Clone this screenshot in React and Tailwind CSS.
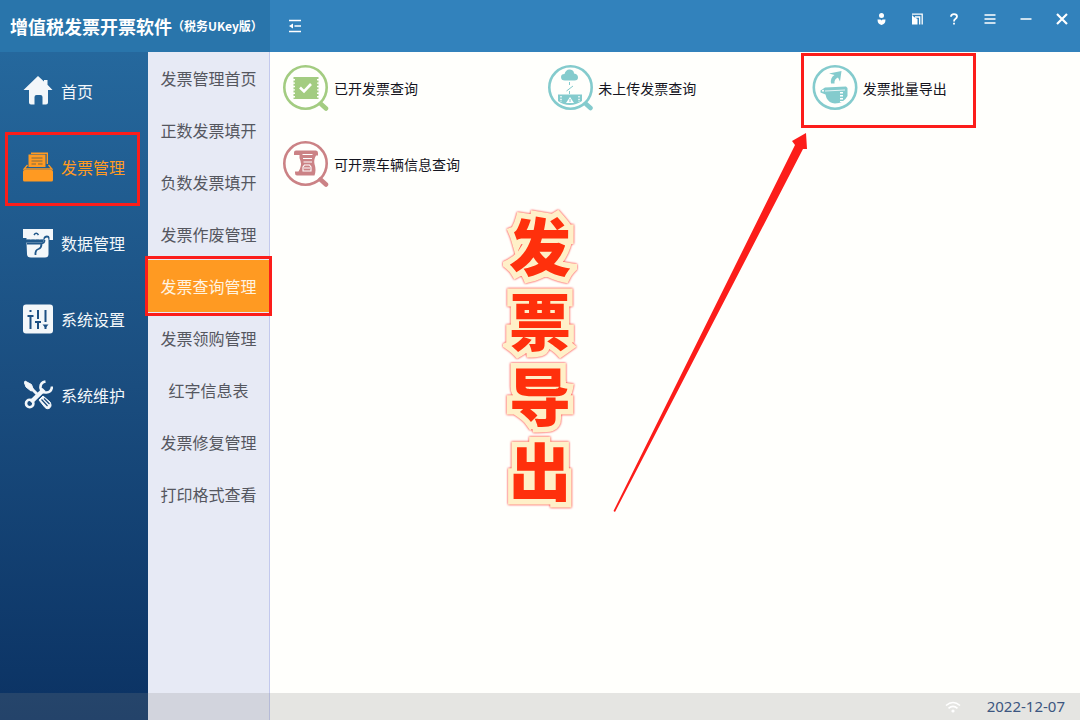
import { useState } from 'react';
import { clsx } from 'clsx';

const HomeIcon = () => (
  <svg viewBox="0 0 30 30" className="size-[30px]" fill="currentColor">
    <path d="M15 0 L21 5.5 V4 H24.5 V8.8 L29.5 14 H25 V26.5 Q25 28.5 23 28.5 H19.5 V21 Q19.5 19 17.5 19 H13.5 Q11.5 19 11.5 21 V28.5 H8 Q6 28.5 6 26.5 V14 H0.5 Z" />
  </svg>
);

const InvoiceIcon = () => (
  <svg viewBox="0 0 30 30" className="size-[30px]" fill="currentColor">
    <path d="M8 2 V0.5 H25 V12 H23.6 V2 Z" />
    <path d="M5.5 2.5 H22.5 V15 H5.5 Z" />
    <path d="M8.5 6 H19.5 M8.5 9 H19.5 M8.5 12 H13 M15 12 H19.5" stroke="#7d6a45" strokeWidth="1" />
    <path d="M4.5 13 L1 17 H29 L25.5 13" fill="none" stroke="currentColor" strokeWidth="1.3" />
    <rect x="0" y="18" width="30" height="11.5" rx="1.5" />
  </svg>
);

const DataIcon = () => (
  <svg viewBox="0 0 30 30" className="size-[30px]" fill="currentColor">
    <path d="M0 1 H30 V12 H26.5 V9.5 Q26.5 7.5 24 7.5 Q21 7.5 20.5 10 V11.5 H3.5 V10 H0 Z" />
    <path d="M3.5 14.5 H20 V12.5 H21 Q22 9 24.5 9.5 Q25.5 10 25.5 12 V26 Q25.5 29.5 22 29.5 H8 Q4 29.5 4 26 Z" />
    <path d="M11 7 Q13.2 3.5 15.5 7" fill="none" stroke="#21588b" strokeWidth="1.5" />
    <path d="M4 15.5 H18 Q21.5 15.5 21.5 12 M12.5 27 Q12 22 15.5 21 Q18.5 20 18.5 16" fill="none" stroke="#21588b" strokeWidth="1.8" />
    <path d="M4 12.5 H20" stroke="#21588b" strokeWidth="1.6" strokeDasharray="3 1.5" />
  </svg>
);

const SettingsIcon = () => (
  <svg viewBox="0 0 30 30" className="size-[30px]">
    <rect x="0" y="0.5" width="30" height="29" rx="3" fill="currentColor" />
    <g stroke="#1d5083" strokeWidth="2" fill="none">
      <path d="M7.5 6 V8 M7.5 11 V25 M4.5 12 H10.5" />
      <path d="M15 6 V15 M15 18 V25 M12 18 H18" />
      <path d="M22.5 6 V18 M22.5 21 V25" />
    </g>
    <path d="M19.5 20.5 H25.5 L22.5 24 Z" fill="#1d5083" />
  </svg>
);

const ToolsIcon = () => (
  <svg viewBox="0 0 30 30" className="size-[30px]" fill="none" stroke="currentColor">
    <path d="M8 22 L21 9.5" strokeWidth="4.5" />
    <circle cx="6.7" cy="23.5" r="3.7" strokeWidth="2.6" />
    <path d="M22.5 1.5 Q17 2.5 17.5 8 Q18.5 13 23.5 12.5 Q28.5 12 29 6.5" strokeWidth="2.6" />
    <path d="M6 6 L14 14" strokeWidth="3" />
    <path d="M2 1 L8.5 4.5 L10.5 10 L8 11 L3 7 L1.5 3 Z" fill="currentColor" strokeWidth="1" />
    <path d="M16 20 L20 16 L27 22 Q29.5 26.5 26 28.5 Q24 29.5 22 27.5 Z" fill="currentColor" strokeWidth="1" />
    <path d="M18.5 19.5 L24.5 26 M21 18.5 L26.5 24" stroke="#194a7b" strokeWidth="1.2" />
  </svg>
);

const IssuedIcon = () => (
  <svg viewBox="0 0 46 46" className="size-[46px] text-[#a3cc81]" fill="none" stroke="currentColor">
    <circle cx="22.5" cy="22.5" r="21.2" strokeWidth="2.6" />
    <path d="M38 39 L43 43.5" strokeWidth="4.5" strokeLinecap="round" />
    <rect x="12" y="12" width="22" height="22" fill="currentColor" stroke="none" />
    <path d="M12.5 12 V34 M33.5 12 V34" strokeWidth="4" strokeDasharray="2 1.4" />
    <path d="M17 22.5 L21 26.5 L28 19" stroke="#fff" strokeWidth="2.6" />
  </svg>
);

const PendingIcon = () => (
  <svg viewBox="0 0 46 46" className="size-[46px] text-[#84cbcd]" fill="none" stroke="currentColor">
    <circle cx="23.5" cy="22.5" r="21.2" strokeWidth="2.6" />
    <path d="M39 39 L43.5 43" strokeWidth="4.5" strokeLinecap="round" />
    <path d="M18 15.5 Q14 15.5 14 12 Q14 9 17.5 9 Q19 4 23 4.5 Q27 5 27 8.5 Q31 9 31 12.5 Q31 15.5 27.5 15.5 Z" fill="currentColor" stroke="none" />
    <path d="M22.5 17 V20 M26 21 L19.5 26 M22.5 26 V29" strokeWidth="1" />
    <path d="M11 29.5 H35 V36 Q29 40 23 40 Q16 40 11 36 Z" fill="currentColor" stroke="none" />
    <path d="M19 38 L23 32 L27 38 Z" fill="#fff" stroke="none" />
    <path d="M23 34 V37" strokeWidth="1" />
    <path d="M14 31 V37 M32 31 V37" stroke="#fff" strokeWidth="1.4" strokeDasharray="1.5 1.2" />
  </svg>
);

const ExportIcon = () => (
  <svg viewBox="0 0 46 46" className="size-[46px] text-[#84cbcd]" fill="none" stroke="currentColor">
    <circle cx="23" cy="22.5" r="21.2" strokeWidth="2.6" />
    <path d="M19 18.5 Q18 12.5 22.5 10 L17 8.5 L29.5 6 L28 16.5 L26 12.5 Q22 14 22.5 18.5 Z" fill="currentColor" stroke="none" />
    <path d="M8.5 25.5 L13 22.5 L34 21.5 L35.5 23 V31 Q31.5 38.5 23 38.5 Q17 38 14.5 33 L13.5 29.5 L8.5 27.5 Z" fill="currentColor" stroke="none" />
    <path d="M13 26 L33 25" stroke="#fff" strokeWidth="0.8" />
    <path d="M29.5 27 V37" stroke="#fff" strokeWidth="3" strokeDasharray="1.4 1.6" />
    <circle cx="11" cy="25.8" r="1" fill="#fff" stroke="none" />
  </svg>
);

const VehicleIcon = () => (
  <svg viewBox="0 0 46 46" className="size-[46px] text-[#cb8285]" fill="none" stroke="currentColor">
    <circle cx="22.5" cy="22.5" r="21.2" strokeWidth="2.6" />
    <path d="M37.5 38.5 L43 43.5" strokeWidth="4.5" strokeLinecap="round" />
    <path d="M11 11.5 Q11 9.5 13 9.5 H33 Q35 9.5 35 12 V14.5 H33 Q30.5 19 31.5 23 Q33.5 29 31.5 34.5 H14 Q12 34.5 12 32 V30.5 H15.5 Q19 25 17.5 20 Q16 17 16.5 14 H11 Z" fill="currentColor" stroke="none" />
    <path d="M19.5 13.5 H29.5 M20 17.5 H29 M20.5 21 H29" stroke="#fff" strokeWidth="1.1" />
    <path d="M20 30 V26 L21.5 24 H26.5 L28 26 V30 Z M21 27 H27" stroke="#fff" strokeWidth="1.1" />
  </svg>
);

const navItems = [
  { label: '首页', icon: HomeIcon },
  { label: '发票管理', icon: InvoiceIcon },
  { label: '数据管理', icon: DataIcon },
  { label: '系统设置', icon: SettingsIcon },
  { label: '系统维护', icon: ToolsIcon },
];

const subItems = [
  '发票管理首页',
  '正数发票填开',
  '负数发票填开',
  '发票作废管理',
  '发票查询管理',
  '发票领购管理',
  '红字信息表',
  '发票修复管理',
  '打印格式查看',
];

const actions = [
  { label: '已开发票查询', icon: IssuedIcon },
  { label: '未上传发票查询', icon: PendingIcon },
  { label: '发票批量导出', icon: ExportIcon, marked: true },
  { label: '可开票车辆信息查询', icon: VehicleIcon },
];

const windowButtons = [
  {
    label: '用户',
    art: (
      <g fill="currentColor">
        <circle cx="7.5" cy="4.5" r="2.5" />
        <path d="M3.5 8.5 H6.5 L7.5 9.5 L8.5 8.5 H11.5 Q11.5 13 7.5 14 Q3.5 13 3.5 8.5 Z" />
      </g>
    ),
  },
  {
    label: '换肤',
    art: (
      <g>
        <path d="M2 4 L4 6 L7.5 8 V13.5 H2 Z" fill="currentColor" />
        <path d="M2 3.2 H12.2 V13.5 M5 6 H9.7 V13.5" fill="none" stroke="currentColor" strokeWidth="1.3" />
      </g>
    ),
  },
  {
    label: '帮助',
    art: (
      <g fill="none" stroke="currentColor" strokeWidth="1.8">
        <path d="M5 5.8 Q5 3.2 8 3.2 Q11 3.2 11 5.6 Q11 7 9.3 8 Q8 8.8 8 10.5" />
        <path d="M8 11.8 V13.6" />
      </g>
    ),
  },
  { label: '菜单', art: <path d="M2.5 4 H13.5 M2.5 8 H13.5 M2.5 12 H13.5" stroke="currentColor" strokeWidth="1.5" /> },
  { label: '最小化', art: <path d="M2.5 8 H13.5" stroke="currentColor" strokeWidth="1.5" /> },
  { label: '关闭', art: <path d="M3 3 L13 13 M13 3 L3 13" stroke="currentColor" strokeWidth="2.2" /> },
];

const App = () => {
  const [nav, setNav] = useState('发票管理');
  const [sub, setSub] = useState('发票查询管理');

  return (
    <div className="relative flex min-h-screen flex-col bg-[#fffffc] font-['Noto_Sans_CJK_SC',sans-serif]">
      <header className="flex h-[52px] bg-[#3282bc] text-white">
        <h1 className="flex w-[270px] shrink-0 items-center bg-[#2975ab] pl-[10px] text-lg font-bold whitespace-nowrap">
          增值税发票开票软件<span className="text-xs">（税务UKey版）</span>
        </h1>
        <button type="button" aria-label="收起菜单" className="flex w-[50px] items-center justify-center">
          <svg viewBox="0 0 14 14" className="size-[14px]" fill="none" stroke="currentColor" strokeWidth="1.6">
            <path d="M1 1.5 H13 M6.5 7 H13 M1 12.5 H13" />
            <path d="M1 7 L5 4.5 V9.5 Z" fill="currentColor" stroke="none" />
          </svg>
        </button>
        <div className="ml-auto flex h-[38px]">
          {windowButtons.map(({ label, art }) => (
            <button key={label} type="button" aria-label={label} className="flex w-9 items-center justify-center">
              <svg viewBox="0 0 16 16" className="size-4">
                {art}
              </svg>
            </button>
          ))}
        </div>
      </header>

      <div className="flex grow">
        <nav className="w-[148px] shrink-0 bg-linear-to-b from-[#25689d] via-[#1a4d7f] to-[#0b3263] pt-px">
          {navItems.map(({ label, icon: Icon }) => (
            <button
              key={label}
              type="button"
              onClick={() => setNav(label)}
              className={clsx(
                'relative flex h-[76px] w-full items-center gap-2 pl-[23px] text-base',
                nav === label ? 'text-[#ff9a22]' : 'text-[#f3f7fa]'
              )}
            >
              <Icon />
              {label}
              {nav === label ? <span className="absolute top-[3px] right-2 -bottom-px left-[5px] border-[3px] border-[#fc1d1a]" /> : null}
            </button>
          ))}
        </nav>

        <nav className="w-[122px] shrink-0 border-r border-[#c3c9ed] bg-[#e7eaf5]">
          {subItems.map((label) => (
            <button
              key={label}
              type="button"
              onClick={() => setSub(label)}
              className={clsx(
                'relative flex h-[52px] w-full items-center justify-center text-base whitespace-nowrap',
                sub === label ? 'bg-[#ff9a22] text-[#fff3e0]' : 'text-[#55575f]'
              )}
            >
              {label}
              {sub === label ? <span className="absolute -inset-x-[3px] -top-1 -bottom-1 z-10 border-[3px] border-[#fc1d1a]" /> : null}
            </button>
          ))}
        </nav>

        <main className="relative grow pt-[13px] pr-1 pl-[13px]">
          <div className="grid grid-cols-3 gap-y-[30px]">
            {actions.map(({ label, icon: Icon, marked }) => (
              <button key={label} type="button" className="relative flex items-center gap-[5px] justify-self-start text-sm text-[#15151f]">
                <Icon />
                {label}
                {marked ? (
                  <span className="absolute -top-3 -right-[29px] -bottom-[17px] -left-[11px] border-[3px] border-[#fc1d1a]" />
                ) : null}
              </button>
            ))}
          </div>

          <p className="absolute top-[155px] left-[239px] w-[62px] text-center text-[62px] leading-[75px] font-black break-all text-[#ff300c] drop-shadow-[0_0_1px_#ff1010] [-webkit-text-stroke:11px_#fff0c8] [paint-order:stroke_fill] [stroke-linejoin:round]">
            发票导出
          </p>

          <svg viewBox="0 0 194 380" className="absolute top-[81px] left-[343px] h-[380px] w-[194px]" fill="#fc1d1a">
            <path d="M0.5 378 L182 12 L179 8 L193 0 L194 16 L190 16 L2 379 Z" />
          </svg>
        </main>
      </div>

      <footer className="absolute inset-x-0 bottom-0 flex h-[27px] items-center justify-end gap-[26px] bg-[#858585]/21 pr-[15px]">
        <svg viewBox="0 0 16 12" className="h-3 w-4" fill="none" stroke="#fff" strokeWidth="1.6">
          <path d="M1 4.5 Q8 -1.5 15 4.5 M3.5 7.3 Q8 3.5 12.5 7.3" />
          <circle cx="8" cy="10" r="1.6" fill="#fff" stroke="none" />
        </svg>
        <time dateTime="2022-12-07" className="font-['Noto_Sans',sans-serif] text-[15px] text-[#3c5680]">
          2022-12-07
        </time>
      </footer>
    </div>
  );
};

export default App;
